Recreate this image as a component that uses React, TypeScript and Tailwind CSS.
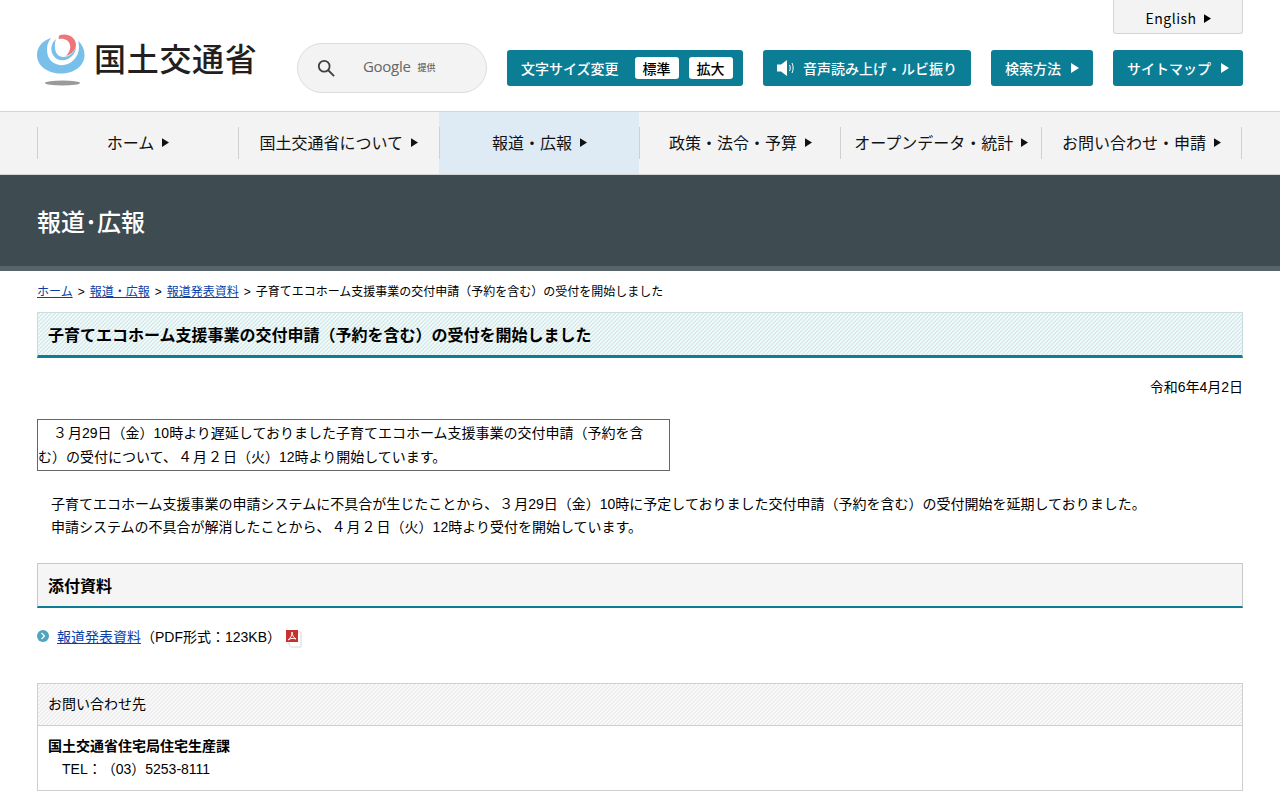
const jp = "font-['Noto_Sans_CJK_JP',sans-serif]";

const navItems = ['ホーム', '国土交通省について', '報道・広報', '政策・法令・予算', 'オープンデータ・統計', 'お問い合わせ・申請'];

const Arrow = ({ className }: { className: string }) => (
  <svg viewBox="0 0 8 10" className={className} fill="currentColor">
    <path d="M0 0 L8 5 L0 10 Z" />
  </svg>
);

// full-width digits sit a little wider in the original
const Wide = ({ children }: { children: React.ReactNode }) => <span className="px-[1px]">{children}</span>;

const Logo = () => (
  <div className="flex items-start">
    <svg viewBox="0 0 48 54" className="w-[48px] h-[54px] shrink-0">
      <path d="M14 4 C5 7 0 13 0 21 C0 32 11 39.5 24 39.5 C37 39.5 47.5 32 47.5 21 C47.5 15 45 10 41 7 C44 16 40 26 31 30 C23 33 14 30 11 22 C9 15 10 9 14 4 Z" fill="#78bfea" />
      <path d="M19 5 C14 9 13 16 16 21 C20 28 30 28 36 21 C38 18 39 16 39 13 C37 19 32 23 26 23 C19 23 16 14 19 5 Z" fill="#78bfea" />
      <path d="M23 1 C31 -1 38 3 39 10 C39 16 35 20 29 22 C32 19 34 15 33 11 C32 6 27 4 22 5 C21 4 22 2 23 1 Z" fill="#ee7579" />
      <ellipse cx="25.5" cy="49" rx="17.5" ry="2.6" fill="#9a9a9a" />
    </svg>
    <span className={`${jp} ml-[9px] mt-[1px] text-[32px] leading-[44px] font-medium text-[#231f20] whitespace-nowrap tracking-[0.7px]`}>国土交通省</span>
  </div>
);

const SearchBox = () => (
  <div className="ml-[41px] mt-[43px] w-[190px] h-[50px] rounded-[25px] border border-[#dcdcdc] bg-[#f3f3f3] flex items-center pl-[19px] shrink-0">
    <svg viewBox="0 0 20 20" className="w-[18px] h-[18px] text-[#3c4043]" fill="none" stroke="currentColor" strokeWidth="2">
      <circle cx="8" cy="8" r="6" />
      <path d="M12.5 12.5 L19 19" />
    </svg>
    <span className="ml-[28px] font-['Open_Sans',sans-serif] text-[15px] text-[#666] tracking-[-0.3px] -mt-[3px]">Google</span>
    <span className={`${jp} ml-[7px] text-[9px] font-medium text-[#666]`}>提供</span>
  </div>
);

const TealButton = ({ children, className }: { children: React.ReactNode; className: string }) => (
  <div className={`${jp} h-[36px] bg-[#0b7d94] rounded-[3px] text-white text-[14px] font-medium flex items-center ${className}`}>{children}</div>
);

const Header = () => (
  <header className="h-[111px] px-[37px] flex">
    <div className="mt-[34px] w-[219px] shrink-0">
      <Logo />
    </div>
    <SearchBox />
    <div className="ml-[20px] flex-1 flex flex-col items-end">
      <div className={`${jp} w-[130px] h-[34px] bg-[#f3f3f3] border border-t-0 border-[#d4d4d4] rounded-b-[3px] flex items-center justify-center text-[14px] text-black gap-[7px] tracking-[0.5px] pt-[3px]`}>
        English
        <Arrow className="w-[7px] h-[9px]" />
      </div>
      <div className="mt-[16px] flex gap-[20px]">
        <TealButton className="w-[236px] pl-[14px]">
          <span>文字サイズ変更</span>
          <span className="ml-[16px] w-[44px] h-[22px] bg-white rounded-[3px] text-black flex items-center justify-center">標準</span>
          <span className="ml-[10px] w-[44px] h-[22px] bg-white rounded-[3px] text-black flex items-center justify-center">拡大</span>
        </TealButton>
        <TealButton className="w-[208px] pl-[14px]">
          <svg viewBox="0 0 18 16" className="w-[18px] h-[16px]" fill="none" stroke="white">
            <path d="M0 4.5 H4 L10 0 V16 L4 11.5 H0 Z" fill="white" stroke="none" />
            <path d="M12.5 5 C13.5 7 13.5 9 12.5 11" strokeWidth="1" />
            <path d="M15 3 C16.5 6 16.5 10 15 13" strokeWidth="1" />
          </svg>
          <span className="ml-[8px]">音声読み上げ・ルビ振り</span>
        </TealButton>
        <TealButton className="w-[102px] pl-[14px]">
          検索方法
          <Arrow className="ml-[10px] w-[8px] h-[10px]" />
        </TealButton>
        <TealButton className="w-[130px] pl-[14px]">
          サイトマップ
          <Arrow className="ml-[10px] w-[8px] h-[10px]" />
        </TealButton>
      </div>
    </div>
  </header>
);

const Nav = () => (
  <nav className="h-[64px] bg-[#f3f3f3] border-y border-[#d5d5d5] px-[37px]">
    <ul className="grid grid-cols-6 w-[1205px] h-full">
      {navItems.map((item, i) => (
        <li key={item} className={`h-full flex items-center ${i === 2 ? 'bg-[#deebf5]' : ''}`}>
          <div className={`${jp} w-full h-[32px] pb-[2px] flex items-center justify-center gap-[8px] text-[16px] text-[#111] whitespace-nowrap border-l border-[#d0d0d0] ${i === 5 ? 'border-r' : ''}`}>
            {item}
            <Arrow className="w-[7px] h-[9px]" />
          </div>
        </li>
      ))}
    </ul>
  </nav>
);

const Crumb = ({ children }: { children: React.ReactNode }) => (
  <>
    <a className="text-[#0b3fa8] underline">{children}</a>
    <span className="mx-[5px]">&gt;</span>
  </>
);

export default function App() {
  return (
    <div className="h-[800px] overflow-hidden bg-white text-black font-['Liberation_Sans','Noto_Sans_CJK_JP',sans-serif] text-[14px] [text-spacing-trim:space-all]">
      <Header />
      <Nav />
      <div className="h-[96px] bg-[#3e4b50] border-b-[5px] border-[#56656b] px-[37px] flex items-center pt-[1px]">
        <h1 className={`${jp} text-[24px] text-white font-medium`}>報道･広報</h1>
      </div>
      <main className="px-[37px]">
        <p className="mt-[13px] h-[17px] text-[12px] leading-[17px]">
          <Crumb>ホーム</Crumb>
          <Crumb>報道・広報</Crumb>
          <Crumb>報道発表資料</Crumb>
          子育てエコホーム支援事業の交付申請（予約を含む）の受付を開始しました
        </p>
        <h2 className="mt-[11px] h-[46px] pl-[10px] pt-[4px] flex items-center border border-[#c9dde2] border-b-[3px] border-b-[#0b7d94] text-[16px] font-bold bg-[linear-gradient(135deg,#d5ebec_25%,#f4fafa_25%,#f4fafa_50%,#d5ebec_50%,#d5ebec_75%,#f4fafa_75%)] bg-[length:4px_4px]">
          子育てエコホーム支援事業の交付申請（予約を含む）の受付を開始しました
        </h2>
        <p className="mt-[19px] text-right leading-[20px]">令和6年4月2日</p>
        <div className="mt-[22px] w-[633px] h-[52px] border border-[#666] leading-[24px] pt-[1px]">
          {'\u3000'}<Wide>３</Wide>月29日（金）10時より遅延しておりました子育てエコホーム支援事業の交付申請（予約を含む）の受付について、<Wide>４</Wide>月<Wide>２</Wide>日（火）12時より開始しています。
        </div>
        <div className="mt-[22px] pl-[14px] leading-[23px]">
          <p>子育てエコホーム支援事業の申請システムに不具合が生じたことから、<Wide>３</Wide>月29日（金）10時に予定しておりました交付申請（予約を含む）の受付開始を延期しておりました。</p>
          <p>申請システムの不具合が解消したことから、<Wide>４</Wide>月<Wide>２</Wide>日（火）12時より受付を開始しています。</p>
        </div>
        <h3 className="mt-[24px] h-[45px] pl-[10px] pt-[3px] flex items-center bg-[#f5f5f5] border border-[#c8c8c8] border-b-[2px] border-b-[#0b7d94] text-[16px] font-bold">添付資料</h3>
        <div className="mt-[17px] h-[24px] flex items-center">
          <svg viewBox="0 0 12 12" className="w-[12px] h-[12px] -mt-[2px]">
            <circle cx="6" cy="6" r="6" fill="#4fa5ba" />
            <path d="M4.5 3 L7.5 6 L4.5 9" fill="none" stroke="white" strokeWidth="1.2" />
          </svg>
          <a className="ml-[8px] text-[#0b3fa8] underline">報道発表資料</a>
          <span>（PDF形式：123KB）</span>
          <svg viewBox="0 0 16 18" className="ml-[5px] w-[16px] h-[18px] mt-[3px]">
            <path d="M3 2 H15 V17 H5 L3 15 Z" fill="#fff" stroke="#d8d8d8" />
            <rect x="0" y="0" width="12" height="12" fill="#c5322f" />
            <path d="M2 10 C5 8 6 5 6 2 C6 5 8 8 10 9 C7 8 5 8 2 10 Z" fill="none" stroke="white" strokeWidth="1" />
          </svg>
        </div>
        <section className="mt-[34px] border border-[#cfcfcf]">
          <div className="h-[42px] pl-[10px] flex items-center border-b border-[#cfcfcf] bg-[linear-gradient(135deg,#ededed_25%,#fafafa_25%,#fafafa_50%,#ededed_50%,#ededed_75%,#fafafa_75%)] bg-[length:4px_4px]">お問い合わせ先</div>
          <div className="h-[64px] pl-[10px] pt-[9px] leading-[23px]">
            <p className="font-bold">国土交通省住宅局住宅生産課</p>
            <p className="pl-[14px]">TEL：（03）5253-8111</p>
          </div>
        </section>
      </main>
    </div>
  );
}
